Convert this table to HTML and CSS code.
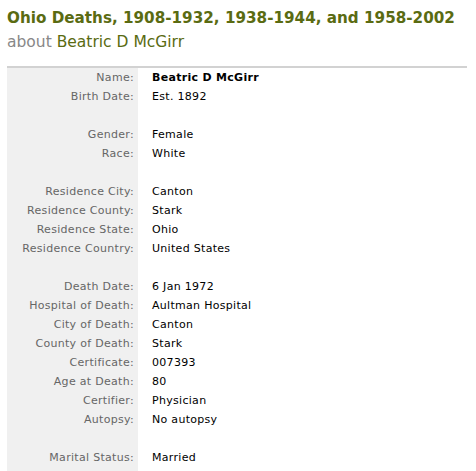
FILE: index.html
```html
<!DOCTYPE html>
<html>
<head>
<meta charset="utf-8">
<link rel="stylesheet" href="styles.css">
</head>
<body>
<div class="page">
  <h1 class="title">Ohio Deaths, 1908-1932, 1938-1944, and 1958-2002</h1>
  <div class="subtitle"><span class="about">about</span> <span class="person">Beatric D McGirr</span></div>
  <div class="record">
    <div class="label">Name:</div><div class="value strong">Beatric D McGirr</div>
    <div class="label">Birth Date:</div><div class="value">Est. 1892</div>
    <div class="label"></div><div class="value"></div>
    <div class="label">Gender:</div><div class="value">Female</div>
    <div class="label">Race:</div><div class="value">White</div>
    <div class="label"></div><div class="value"></div>
    <div class="label">Residence City:</div><div class="value">Canton</div>
    <div class="label">Residence County:</div><div class="value">Stark</div>
    <div class="label">Residence State:</div><div class="value">Ohio</div>
    <div class="label">Residence Country:</div><div class="value">United States</div>
    <div class="label"></div><div class="value"></div>
    <div class="label">Death Date:</div><div class="value">6 Jan 1972</div>
    <div class="label">Hospital of Death:</div><div class="value">Aultman Hospital</div>
    <div class="label">City of Death:</div><div class="value">Canton</div>
    <div class="label">County of Death:</div><div class="value">Stark</div>
    <div class="label">Certificate:</div><div class="value">007393</div>
    <div class="label">Age at Death:</div><div class="value">80</div>
    <div class="label">Certifier:</div><div class="value">Physician</div>
    <div class="label">Autopsy:</div><div class="value">No autopsy</div>
    <div class="label"></div><div class="value"></div>
    <div class="label">Marital Status:</div><div class="value">Married</div>
    <div class="label"></div><div class="value"></div>
  </div>
</div>
</body>
</html>
```
FILE: styles.css
```css
html, body {
  margin: 0;
  padding: 0;
  background: #fff;
}
.page {
  padding: 6px 9px 0 7px;
  font-family: "DejaVu Sans", Verdana, sans-serif;
}
.title {
  margin: 0;
  font-size: 15.2px;
  font-weight: bold;
  color: #5a6b12;
  line-height: 24px;
}
.subtitle {
  font-size: 15.5px;
  line-height: 24px;
}
.about { color: #888; }
.person { color: #5a6b12; }
.record {
  margin-top: 12px;
  border-top: 2px solid #d2d2d2;
  display: grid;
  grid-template-columns: 131px 1fr;
  grid-auto-rows: 19px;
  font-size: 11px;
  letter-spacing: 0.3px;
}
.label {
  background: #f0f0f0;
  color: #666;
  text-align: right;
  padding-right: 4px;
  line-height: 19px;
  white-space: nowrap;
}
.value {
  color: #000;
  padding-left: 14px;
  line-height: 19px;
  white-space: nowrap;
}
.strong { font-weight: bold; }
```
